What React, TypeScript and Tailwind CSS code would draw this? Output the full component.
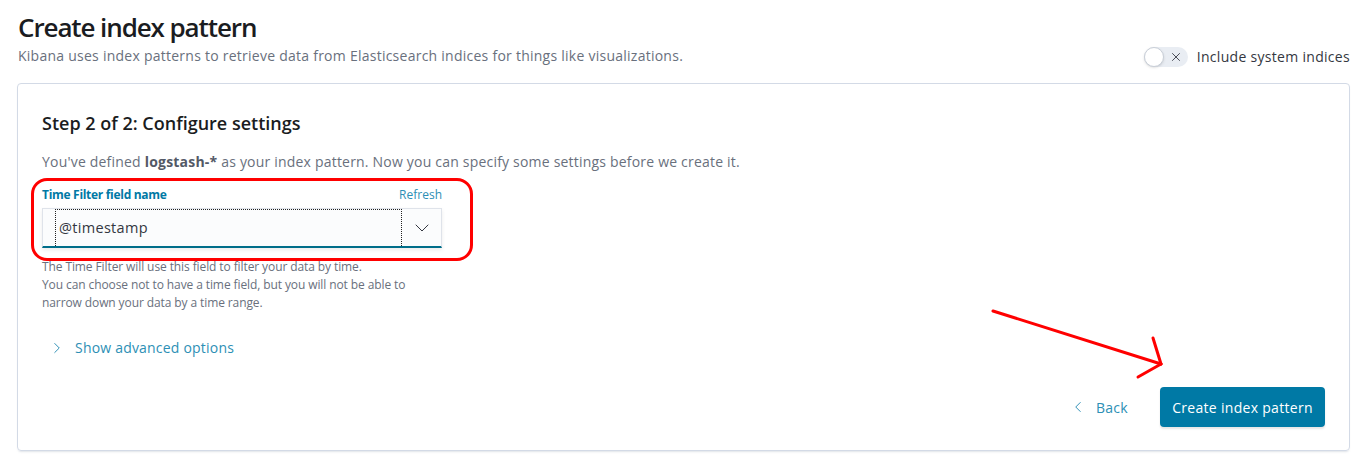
import { ChevronDown, ChevronLeft, ChevronRight, X } from 'lucide-react';

export default function App() {
    return (
        <div className="relative w-[1360px] h-[465px] bg-white font-['Open_Sans',sans-serif] text-[#343741] overflow-hidden">
            {/* Header */}
            <div className="flex justify-between items-end px-[18px] pt-[9px]">
                <div>
                    <h1 className="text-[26px] leading-[36px] font-semibold text-[#1a1c21] tracking-[-1.1px]">
                        Create index pattern
                    </h1>
                    <p className="text-[14px] leading-[22px] text-[#69707d] tracking-[0.25px]">
                        Kibana uses index patterns to retrieve data from Elasticsearch indices for things like visualizations.
                    </p>
                </div>
                <div className="flex items-center gap-[9px] mr-[-8px]">
                    <div className="relative w-[44px] h-[20px] rounded-full bg-[#e9edf3] flex items-center">
                        <div className="w-[20px] h-[20px] rounded-full bg-white border border-[#c9cfd8] shadow-sm" />
                        <X size={14} strokeWidth={1.5} className="ml-[5px] text-[#343741]" />
                    </div>
                    <span className="text-[14px] tracking-[0.3px]">Include system indices</span>
                </div>
            </div>

            {/* Card */}
            <div className="mx-[17px] mt-[16px] w-[1333px] h-[368px] border border-[#d3dae6] rounded-[4px] shadow-[0_2px_2px_-1px_rgba(152,162,179,0.3)] px-[24px] pt-[26px] pb-[23px] flex flex-col">
                <h2 className="text-[18px] leading-[26px] font-semibold text-[#1a1c21]">
                    Step 2 of 2: Configure settings
                </h2>
                <p className="mt-[15px] text-[14px] leading-[22px] text-[#69707d] tracking-[0.2px]">
                    You've defined <span className="font-bold text-[#535966]">logstash-*</span> as your index pattern. Now you can specify some settings before we create it.
                </p>

                <div className="relative mt-[14px] w-[400px]">
                    <div className="flex justify-between items-end text-[12px] leading-[16px]">
                        <span className="font-bold text-[#0079a5] tracking-[-0.3px]">Time Filter field name</span>
                        <span className="text-[#2d8fb5]">Refresh</span>
                    </div>
                    <div className="mt-[5px] flex h-[40px] bg-[#fbfcfd] border border-[#dfe3ea] border-b-2 border-b-[#006e8a] shadow-[0_2px_4px_rgba(0,0,0,0.08)]">
                        <div className="ml-[12px] flex-1 flex items-center border border-dotted border-[#222] border-b-0 pl-[3px] text-[14.5px] tracking-[0.3px] text-[#343741]">
                            @timestamp
                        </div>
                        <div className="w-[39px] flex items-center justify-center">
                            <ChevronDown size={24} strokeWidth={1} className="text-[#343741]" />
                        </div>
                    </div>
                    {/* annotation */}
                    <div className="absolute left-[-11px] top-[-9px] w-[442px] h-[83px] border-[3px] border-[#ff0000] rounded-[16px] pointer-events-none" />
                    <div className="mt-[10px] text-[12px] leading-[18px] text-[#69707d] tracking-[-0.1px]">
                        <p>The Time Filter will use this field to filter your data by time.</p>
                        <p>You can choose not to have a time field, but you will not be able to</p>
                        <p>narrow down your data by a time range.</p>
                    </div>
                </div>

                <button className="mt-[25px] ml-[6px] flex items-center gap-[9px] text-[14px] text-[#2d8fb5] w-fit">
                    <ChevronRight size={18} strokeWidth={1.3} />
                    <span className="tracking-[0.2px]">Show advanced options</span>
                </button>

                <div className="mt-auto flex justify-end items-center gap-[20px]">
                    <button className="h-[40px] px-[12px] flex items-center gap-[9px] text-[14px] text-[#2d8fb5] tracking-[0.3px]">
                        <ChevronLeft size={18} strokeWidth={1.3} />
                        Back
                    </button>
                    <button className="h-[40px] w-[165px] rounded-[4px] bg-[#0079a5] text-white text-[14px] shadow-[0_2px_2px_rgba(0,0,0,0.1)] tracking-[0.3px]">
                        Create index pattern
                    </button>
                </div>
            </div>

            {/* red arrow annotation */}
            <svg className="absolute left-0 top-0 pointer-events-none" width="1360" height="465">
                <g stroke="#ff0000" strokeWidth="3" fill="none" strokeLinecap="round">
                    <line x1="993" y1="311" x2="1161" y2="364" />
                    <line x1="1153" y1="338" x2="1161" y2="364" />
                    <line x1="1161" y1="364" x2="1138" y2="377" />
                </g>
            </svg>
        </div>
    );
}
